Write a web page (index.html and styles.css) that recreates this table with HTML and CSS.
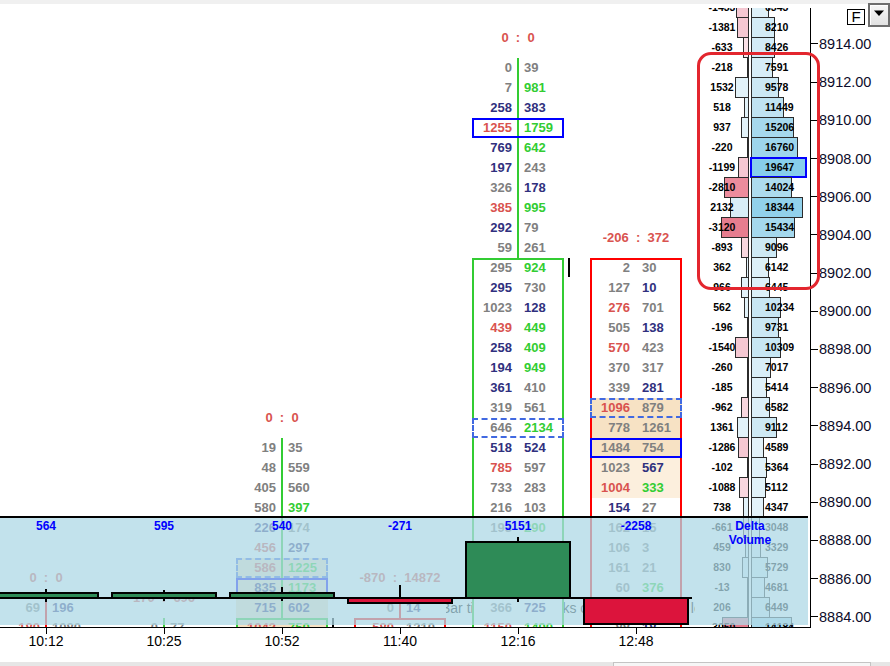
FILE: index.html
```html
<!DOCTYPE html>
<html>
<head>
<meta charset="utf-8">
<link rel="stylesheet" href="styles.css">
</head>
<body>
<div class="app">
  <div class="chart">
    <div class="bar-text">Bar timer: 10000 ticks countdown: 2415 left</div>
    <div class="fp-track">
      <!-- 10:12 -->
      <div class="fp bear c1">
        <div class="fh">0&nbsp;&nbsp;:&nbsp;&nbsp;0</div>
        <div class="line">
          <div class="fr"><span class="k">69</span><span class="n">196</span></div>
          <div class="fr"><span class="r">180</span><span class="k">1080</span></div>
        </div>
      </div>
      <!-- 10:25 -->
      <div class="fp bull c2">
        <div class="fh">170&nbsp;&nbsp;:&nbsp;&nbsp;696</div>
        <div class="line">
          <div class="fr"><span class="k">0</span><span class="k">77</span></div>
        </div>
      </div>
      <!-- 10:52 -->
      <div class="fp bull c3">
        <div class="fh">0&nbsp;&nbsp;:&nbsp;&nbsp;0</div>
        <div class="line">
          <div class="fr"><span class="k">19</span><span class="k">35</span></div>
          <div class="fr"><span class="k">48</span><span class="k">559</span></div>
          <div class="fr"><span class="k">405</span><span class="k">560</span></div>
          <div class="fr"><span class="k">580</span><span class="l">397</span></div>
          <div class="fr"><span class="n">226</span><span class="k">174</span></div>
          <div class="fr"><span class="r">456</span><span class="n">297</span></div>
          <div class="fr t1 dash"><span class="r">586</span><span class="l">1225</span></div>
          <div class="fr t1 poc"><span class="n">835</span><span class="l">1173</span></div>
          <div class="fr t1"><span class="n">715</span><span class="n">602</span></div>
        </div>
        <div class="va mark">
          <div class="fr t1"><span class="r">1043</span><span class="l">750</span></div>
          <div class="fr"><span class="k">300</span><span class="n">412</span></div>
        </div>
      </div>
      <!-- 11:40 -->
      <div class="fp bear c4">
        <div class="fh">-870&nbsp;&nbsp;:&nbsp;&nbsp;14872</div>
        <div class="line">
          <div class="fr"><span class="k">0</span><span class="n">14</span></div>
        </div>
        <div class="va">
          <div class="fr"><span class="r">580</span><span class="k">1210</span></div>
          <div class="fr"><span class="k">120</span><span class="k">95</span></div>
        </div>
      </div>
      <!-- 12:16 -->
      <div class="fp bull c5">
        <div class="fh">0&nbsp;&nbsp;:&nbsp;&nbsp;0</div>
        <div class="line">
          <div class="fr"><span class="k">0</span><span class="k">39</span></div>
          <div class="fr"><span class="k">7</span><span class="l">981</span></div>
          <div class="fr"><span class="n">258</span><span class="n">383</span></div>
          <div class="fr poc"><span class="r">1255</span><span class="l">1759</span></div>
          <div class="fr"><span class="n">769</span><span class="l">642</span></div>
          <div class="fr"><span class="n">197</span><span class="k">243</span></div>
          <div class="fr"><span class="k">326</span><span class="n">178</span></div>
          <div class="fr"><span class="r">385</span><span class="l">995</span></div>
          <div class="fr"><span class="n">292</span><span class="k">79</span></div>
          <div class="fr"><span class="k">59</span><span class="k">261</span></div>
        </div>
        <div class="va mark">
          <div class="fr"><span class="k">295</span><span class="l">924</span></div>
          <div class="fr"><span class="n">295</span><span class="k">730</span></div>
          <div class="fr"><span class="k">1023</span><span class="n">128</span></div>
          <div class="fr"><span class="r">439</span><span class="l">449</span></div>
          <div class="fr"><span class="n">258</span><span class="l">409</span></div>
          <div class="fr"><span class="n">194</span><span class="l">949</span></div>
          <div class="fr"><span class="n">361</span><span class="k">410</span></div>
          <div class="fr"><span class="k">319</span><span class="k">561</span></div>
          <div class="fr dash"><span class="k">646</span><span class="l">2134</span></div>
          <div class="fr"><span class="n">518</span><span class="n">524</span></div>
          <div class="fr"><span class="r">785</span><span class="k">597</span></div>
          <div class="fr"><span class="k">733</span><span class="k">283</span></div>
          <div class="fr"><span class="k">216</span><span class="k">103</span></div>
          <div class="fr"><span class="k">193</span><span class="l">290</span></div>
          <div class="fr"><span class="k">412</span><span class="n">640</span></div>
          <div class="fr"><span class="r">873</span><span class="k">517</span></div>
          <div class="fr"><span class="k">298</span><span class="l">356</span></div>
          <div class="fr"><span class="k">366</span><span class="n">725</span></div>
          <div class="fr"><span class="r">1150</span><span class="l">1490</span></div>
        </div>
      </div>
      <!-- 12:48 -->
      <div class="fp bear c6">
        <div class="fh">-206&nbsp;&nbsp;:&nbsp;&nbsp;372</div>
        <div class="va">
          <div class="fr"><span class="k">2</span><span class="k">30</span></div>
          <div class="fr"><span class="k">127</span><span class="n">10</span></div>
          <div class="fr"><span class="r">276</span><span class="k">701</span></div>
          <div class="fr"><span class="k">505</span><span class="n">138</span></div>
          <div class="fr"><span class="r">570</span><span class="k">423</span></div>
          <div class="fr"><span class="k">370</span><span class="k">317</span></div>
          <div class="fr"><span class="k">339</span><span class="n">281</span></div>
          <div class="fr t1 dash"><span class="r">1096</span><span class="k">879</span></div>
          <div class="fr t1"><span class="k">778</span><span class="k">1261</span></div>
          <div class="fr t1 poc"><span class="k">1484</span><span class="k">754</span></div>
          <div class="fr t2"><span class="k">1023</span><span class="n">567</span></div>
          <div class="fr t2"><span class="r">1004</span><span class="l">333</span></div>
          <div class="fr"><span class="n">154</span><span class="k">27</span></div>
          <div class="fr"><span class="k">162</span><span class="k">15</span></div>
          <div class="fr"><span class="k">106</span><span class="k">3</span></div>
          <div class="fr"><span class="k">161</span><span class="k">21</span></div>
          <div class="fr"><span class="k">60</span><span class="l">376</span></div>
          <div class="fr"><span class="k">84</span><span class="k">41</span></div>
          <div class="fr"><span class="k">88</span><span class="n">18</span></div>
        </div>
      </div>
      <!-- volume profile -->
      <div class="prof">
        <div class="pr"><div class="pd"><i class="bar ng2" style="width:12.7px"></i><span class="num">-1433</span></div><span></span><div class="pv"><i class="bar" style="width:18.4px;background:#ddf0f8"></i><span class="num">6343</span></div></div>
        <div class="pr"><div class="pd"><i class="bar ng2" style="width:12.2px"></i><span class="num">-1381</span></div><span></span><div class="pv"><i class="bar" style="width:23.8px;background:#d4ecf6"></i><span class="num">8210</span></div></div>
        <div class="pr"><div class="pd"><i class="bar ng0" style="width:5.6px"></i><span class="num">-633</span></div><span></span><div class="pv"><i class="bar" style="width:24.4px;background:#d3ebf6"></i><span class="num">8426</span></div></div>
        <div class="pr"><div class="pd"><i class="bar ng0" style="width:2px"></i><span class="num">-218</span></div><span></span><div class="pv"><i class="bar" style="width:22px;background:#d7edf7"></i><span class="num">7591</span></div></div>
        <div class="pr"><div class="pd"><i class="bar ps" style="width:13.6px"></i><span class="num">1532</span></div><span></span><div class="pv"><i class="bar" style="width:27.8px;background:#cce8f4"></i><span class="num">9578</span></div></div>
        <div class="pr"><div class="pd"><i class="bar ps" style="width:4.6px"></i><span class="num">518</span></div><span></span><div class="pv"><i class="bar" style="width:33.2px;background:#c0e3f2"></i><span class="num">11449</span></div></div>
        <div class="pr"><div class="pd"><i class="bar ps" style="width:8.3px"></i><span class="num">937</span></div><span></span><div class="pv"><i class="bar" style="width:43px;background:#a6d8ed"></i><span class="num">15206</span></div></div>
        <div class="pr"><div class="pd"><i class="bar ng0" style="width:2px"></i><span class="num">-220</span></div><span></span><div class="pv"><i class="bar" style="width:47px;background:#9dd5ec"></i><span class="num">16760</span></div></div>
        <div class="pr"><div class="pd"><i class="bar ng2" style="width:10.6px"></i><span class="num">-1199</span></div><span></span><div class="pv"><i class="bar poc" style="width:57px;background:#87ceeb"></i><span class="num">19647</span></div></div>
        <div class="pr"><div class="pd"><i class="bar ng3" style="width:24.9px"></i><span class="num">-2810</span></div><span></span><div class="pv"><i class="bar" style="width:41px;background:#addbee"></i><span class="num">14024</span></div></div>
        <div class="pr"><div class="pd"><i class="bar ps2" style="width:18.9px"></i><span class="num">2132</span></div><span></span><div class="pv"><i class="bar" style="width:52px;background:#92d1eb"></i><span class="num">18344</span></div></div>
        <div class="pr"><div class="pd"><i class="bar ng4" style="width:27.6px"></i><span class="num">-3120</span></div><span></span><div class="pv"><i class="bar" style="width:43.5px;background:#a5d8ed"></i><span class="num">15434</span></div></div>
        <div class="pr"><div class="pd"><i class="bar ng1" style="width:7.9px"></i><span class="num">-893</span></div><span></span><div class="pv"><i class="bar" style="width:26.4px;background:#cee9f4"></i><span class="num">9096</span></div></div>
        <div class="pr"><div class="pd"><i class="bar ps" style="width:3.2px"></i><span class="num">362</span></div><span></span><div class="pv"><i class="bar" style="width:17.8px;background:#ddf0f8"></i><span class="num">6142</span></div></div>
        <div class="pr"><div class="pd"><i class="bar ps" style="width:8.5px"></i><span class="num">966</span></div><span></span><div class="pv"><i class="bar" style="width:18.7px;background:#dcf0f8"></i><span class="num">6445</span></div></div>
        <div class="pr"><div class="pd"><i class="bar ps" style="width:5px"></i><span class="num">562</span></div><span></span><div class="pv"><i class="bar" style="width:29.7px;background:#c8e6f3"></i><span class="num">10234</span></div></div>
        <div class="pr"><div class="pd"><i class="bar ng0" style="width:2px"></i><span class="num">-196</span></div><span></span><div class="pv"><i class="bar" style="width:28.2px;background:#cbe7f4"></i><span class="num">9731</span></div></div>
        <div class="pr"><div class="pd"><i class="bar ng2" style="width:13.6px"></i><span class="num">-1540</span></div><span></span><div class="pv"><i class="bar" style="width:29.9px;background:#c7e6f3"></i><span class="num">10309</span></div></div>
        <div class="pr"><div class="pd"><i class="bar ng0" style="width:2.3px"></i><span class="num">-260</span></div><span></span><div class="pv"><i class="bar" style="width:20.3px;background:#d9eef7"></i><span class="num">7017</span></div></div>
        <div class="pr"><div class="pd"><i class="bar ng0" style="width:2px"></i><span class="num">-185</span></div><span></span><div class="pv"><i class="bar" style="width:15.7px;background:#e0f1f9"></i><span class="num">5414</span></div></div>
        <div class="pr"><div class="pd"><i class="bar ng1" style="width:8.5px"></i><span class="num">-962</span></div><span></span><div class="pv"><i class="bar" style="width:19.1px;background:#dbeff8"></i><span class="num">6582</span></div></div>
        <div class="pr"><div class="pd"><i class="bar ps" style="width:12px"></i><span class="num">1361</span></div><span></span><div class="pv"><i class="bar" style="width:26.4px;background:#cee9f4"></i><span class="num">9112</span></div></div>
        <div class="pr"><div class="pd"><i class="bar ng2" style="width:11.4px"></i><span class="num">-1286</span></div><span></span><div class="pv"><i class="bar" style="width:13.3px;background:#e3f2f9"></i><span class="num">4589</span></div></div>
        <div class="pr"><div class="pd"><i class="bar ng0" style="width:2px"></i><span class="num">-102</span></div><span></span><div class="pv"><i class="bar" style="width:15.5px;background:#e0f1f9"></i><span class="num">5364</span></div></div>
        <div class="pr"><div class="pd"><i class="bar ng1" style="width:9.6px"></i><span class="num">-1088</span></div><span></span><div class="pv"><i class="bar" style="width:14.8px;background:#e1f2f9"></i><span class="num">5112</span></div></div>
        <div class="pr"><div class="pd"><i class="bar ps" style="width:6.5px"></i><span class="num">738</span></div><span></span><div class="pv"><i class="bar" style="width:12.6px;background:#e4f3fa"></i><span class="num">4347</span></div></div>
        <div class="pr"><div class="pd"><i class="bar ng0" style="width:5.8px"></i><span class="num">-661</span></div><span></span><div class="pv"><i class="bar" style="width:8.8px;background:#e8f5fb"></i><span class="num">3048</span></div></div>
        <div class="pr"><div class="pd"><i class="bar ps" style="width:4.1px"></i><span class="num">459</span></div><span></span><div class="pv"><i class="bar" style="width:9.6px;background:#e7f4fa"></i><span class="num">3329</span></div></div>
        <div class="pr"><div class="pd"><i class="bar ps" style="width:7.3px"></i><span class="num">830</span></div><span></span><div class="pv"><i class="bar" style="width:16.6px;background:#dff1f8"></i><span class="num">5729</span></div></div>
        <div class="pr"><div class="pd"><i class="bar ng0" style="width:2px"></i><span class="num">-13</span></div><span></span><div class="pv"><i class="bar" style="width:13.6px;background:#e3f2f9"></i><span class="num">4681</span></div></div>
        <div class="pr"><div class="pd"><i class="bar ps" style="width:2px"></i><span class="num">206</span></div><span></span><div class="pv"><i class="bar" style="width:18.7px;background:#dcf0f8"></i><span class="num">6449</span></div></div>
        <div class="pr"><div class="pd"><i class="bar ng4" style="width:27px"></i><span class="num">-3050</span></div><span></span><div class="pv"><i class="bar" style="width:41.1px;background:#acdbee"></i><span class="num">14184</span></div></div>
      </div>
    </div>

    <!-- delta volume sub-pane -->
    <div class="pane">
      <div class="zero"></div>
      <div class="sp-cells">
        <div class="sp-cell"><div class="sp-wick w1"></div><div class="sp-bar up-s"></div><div class="sp-val">564</div></div>
        <div class="sp-cell"><div class="sp-wick w2"></div><div class="sp-bar up-s"></div><div class="sp-val">595</div></div>
        <div class="sp-cell"><div class="sp-wick w3"></div><div class="sp-bar up-s"></div><div class="sp-val">540</div></div>
        <div class="sp-cell"><div class="sp-wick w4"></div><div class="sp-bar dn-s"></div><div class="sp-val">-271</div></div>
        <div class="sp-cell"><div class="sp-wick w5"></div><div class="sp-bar up-l"></div><div class="sp-val">5151</div></div>
        <div class="sp-cell"><div class="sp-bar dn-l"></div><div class="sp-val">-2258</div></div>
        <div class="sp-name">Delta<br>Volume</div>
      </div>
    </div>
  </div>

  <div class="axis">
    <div class="pl">8914.00</div>
    <div class="pl">8912.00</div>
    <div class="pl">8910.00</div>
    <div class="pl">8908.00</div>
    <div class="pl">8906.00</div>
    <div class="pl">8904.00</div>
    <div class="pl">8902.00</div>
    <div class="pl">8900.00</div>
    <div class="pl">8898.00</div>
    <div class="pl">8896.00</div>
    <div class="pl">8894.00</div>
    <div class="pl">8892.00</div>
    <div class="pl">8890.00</div>
    <div class="pl">8888.00</div>
    <div class="pl">8886.00</div>
    <div class="pl">8884.00</div>
  </div>

  <div class="times">
    <div class="tl">10:12</div>
    <div class="tl">10:25</div>
    <div class="tl">10:52</div>
    <div class="tl">11:40</div>
    <div class="tl">12:16</div>
    <div class="tl">12:48</div>
  </div>
  <div class="corner"></div>

  <div class="scroll"><div class="thumb"></div></div>

  <div class="topstrip"></div>
  <div class="highlight"></div>
  <div class="tools">
    <div class="fbtn">F</div>
    <div class="ddbtn"><svg width="12" height="7" viewBox="0 0 12 7"><path d="M1 0.5 L11 0.5 L6 6 Z" fill="#000"/></svg></div>
  </div>
</div>
</body>
</html>
```

FILE: styles.css
```css
* { box-sizing: border-box; margin: 0; padding: 0; }
html, body { width: 890px; height: 666px; overflow: hidden; background: #fff; }
body { font-family: "Liberation Sans", Arial, sans-serif; color: #000; }

.app {
  position: relative;
  display: grid;
  grid-template-columns: 810px 80px;
  grid-template-rows: 628px 34px 4px;
  width: 890px;
  height: 666px;
}

/* ---------- chart ---------- */
.chart {
  position: relative;
  overflow: hidden;
  border-bottom: 1px solid #000;
}

.bar-text {
  position: absolute;
  z-index: 0;
  left: 441px;
  top: 600px;
  font-size: 14px;
  line-height: 16px;
  white-space: nowrap;
  color: #000;
}

.fp-track {
  position: relative;
  z-index: 1;
  display: flex;
  align-items: flex-start;
  margin-left: -13px;
}

.fp { flex: none; width: 92px; margin: 0 13px; }
.fp.bull { --c: #33cc33; }
.fp.bear { --c: #ff0000; }
.c1 { margin-top: 568px; }
.c2 { margin-top: 588px; }
.c3 { margin-top: 408px; }
.c4 { margin-top: 568px; }
.c5 { margin-top: 28px; }
.c6 { margin-top: 228px; }

.fh {
  height: 20px;
  line-height: 20px;
  margin-bottom: 10px;
  text-align: center;
  font-size: 13px;
  font-weight: bold;
  color: #d9534f;
  white-space: nowrap;
}

.fr {
  --bg: #fff;
  display: grid;
  grid-template-columns: 1fr 1fr;
  height: 20px;
  line-height: 20px;
  font-size: 13px;
  font-weight: bold;
  background: var(--bg);
  white-space: nowrap;
}
.fr span:first-child { text-align: right; padding-right: 6px; }
.fr span:last-child { padding-left: 6px; }
.line .fr {
  background: linear-gradient(90deg, transparent 45px, var(--c) 45px, var(--c) 47px, transparent 47px), var(--bg);
}
.fr.t1 { --bg: #f7e2c4; }
.fr.t2 { --bg: #fcefdd; }
.fr.poc { position: relative; outline: 2px solid #0000ff; outline-offset: -2px; }
.fr.dash { position: relative; outline: 2px dashed #4169e1; outline-offset: -2px; }

.va {
  position: relative;
  outline: 2px solid var(--c);
  outline-offset: -2px;
}
.va.mark::after {
  content: "";
  position: absolute;
  left: 96px;
  top: 0;
  width: 2px;
  height: 19px;
  background: #000;
}

.k { color: #808080; }
.n { color: #30307e; }
.r { color: #d9534f; }
.l { color: #32cd32; }

/* ---------- volume profile ---------- */
.prof {
  flex: none;
  width: 113px;
  margin-top: -3px;
  background: #fff;
}
.pr {
  display: grid;
  grid-template-columns: 54px 2px 57px;
  height: 20px;
  font-size: 10.5px;
  font-weight: bold;
  color: #000;
}
.pd, .pv { display: grid; align-items: start; }
.pd > *, .pv > * { grid-area: 1 / 1; }
.pr .bar {
  display: block;
  height: 21px;
  border: 1px solid #2b2b2b;
}
.pd .bar { justify-self: end; }
.pv .bar { justify-self: start; }
.pv .bar.poc { border: 2px solid #0000ff; margin-left: -1px; }
.pr .num { line-height: 20px; white-space: nowrap; }
.pd .num { justify-self: center; }
.pv .num { justify-self: start; padding-left: 14px; }

.ng0 { background: #fae1e7; }
.ng1 { background: #f8d6de; }
.ng2 { background: #f5c8d2; }
.ng3 { background: #ec8c9d; }
.ng4 { background: #e67d8f; }
.ps { background: #e2f2f9; }
.ps2 { background: #d8eef7; }

/* ---------- delta sub-pane ---------- */
.pane {
  position: absolute;
  z-index: 2;
  left: 0;
  top: 516px;
  width: 808px;
  height: 109px;
  border-top: 2px solid #000;
  background: rgba(173, 216, 230, 0.75);
}
.zero {
  position: absolute;
  left: 0;
  top: 79px;
  width: 692px;
  height: 2px;
  background: #000;
}
.sp-cells {
  display: flex;
  height: 100%;
  margin-left: -13px;
}
.sp-cell {
  position: relative;
  flex: none;
  width: 118px;
  height: 100%;
}
.sp-val {
  position: relative;
  text-align: center;
  font-size: 12px;
  font-weight: bold;
  line-height: 16px;
  color: #0000ff;
}
.sp-bar {
  position: absolute;
  left: 6px;
  width: 106px;
  border: 2px solid #000;
}
.up-s { top: 74px; height: 7px; background: #2e8b57; }
.dn-s { top: 79px; height: 7px; background: #dc143c; }
.up-l { top: 23px; height: 58px; background: #2e8b57; }
.dn-l { top: 79px; height: 28px; background: #dc143c; }
.sp-wick {
  position: absolute;
  left: 58px;
  width: 2px;
  background: #000;
}
.w1 { top: 71px; height: 13px; }
.w2 { top: 72px; height: 11px; }
.w3 { top: 69px; height: 14px; }
.w4 { top: 67px; height: 13px; }
.w5 { top: 19px; height: 65px; }
.sp-name {
  flex: none;
  width: 110px;
  text-align: center;
  font-size: 12px;
  font-weight: bold;
  line-height: 14px;
  padding-top: 1px;
  color: #0000ff;
}

/* ---------- price axis ---------- */
.axis {
  border-left: 1px solid #000;
  padding-top: 24.9px;
}
.pl {
  display: flex;
  align-items: center;
  height: 38.2px;
  font-size: 14.5px;
  color: #0c0c2a;
  white-space: nowrap;
}
.pl::before {
  content: "";
  width: 7px;
  height: 1px;
  margin-right: 1px;
  background: #000;
}

/* ---------- time axis ---------- */
.times {
  display: flex;
  margin-left: -13px;
}
.tl {
  flex: none;
  width: 118px;
  display: flex;
  flex-direction: column;
  align-items: center;
  font-size: 14px;
  line-height: 16px;
  color: #000;
}
.tl::before {
  content: "";
  width: 1px;
  height: 6px;
  margin-bottom: -1px;
  background: #000;
}

/* ---------- scrollbar ---------- */
.scroll {
  grid-column: 1 / -1;
  display: flex;
  background: #e6e6e6;
}
.thumb {
  margin-left: 613px;
  width: 258px;
  background: #f6f6f6;
  border: 1px solid #c4c4c4;
  border-bottom: none;
}

/* ---------- overlays ---------- */
.topstrip {
  position: absolute;
  left: 0;
  top: 0;
  width: 890px;
  height: 8px;
  border-top: 4px solid #f0f0f0;
  background: #fff;
  z-index: 5;
}
.highlight {
  position: absolute;
  left: 697px;
  top: 52px;
  width: 123px;
  height: 238px;
  border: 3px solid #e3262e;
  border-radius: 14px;
  z-index: 4;
}
.tools {
  position: absolute;
  top: 3px;
  right: 0;
  display: flex;
  align-items: flex-start;
  gap: 3px;
  z-index: 6;
}
.fbtn {
  margin-top: 6px;
  width: 18px;
  height: 16px;
  border: 1px solid #000;
  background: #fff;
  font-size: 15px;
  line-height: 14px;
  text-align: center;
}
.ddbtn {
  width: 22px;
  height: 24px;
  border: 2px solid #6e6e6e;
  background: linear-gradient(#f7f7f7, #e2e2e2);
  box-shadow: inset 1px 1px 0 #fff;
  display: flex;
  align-items: center;
  justify-content: center;
}
.ddbtn svg { display: block; margin-top: -3px; }
```
